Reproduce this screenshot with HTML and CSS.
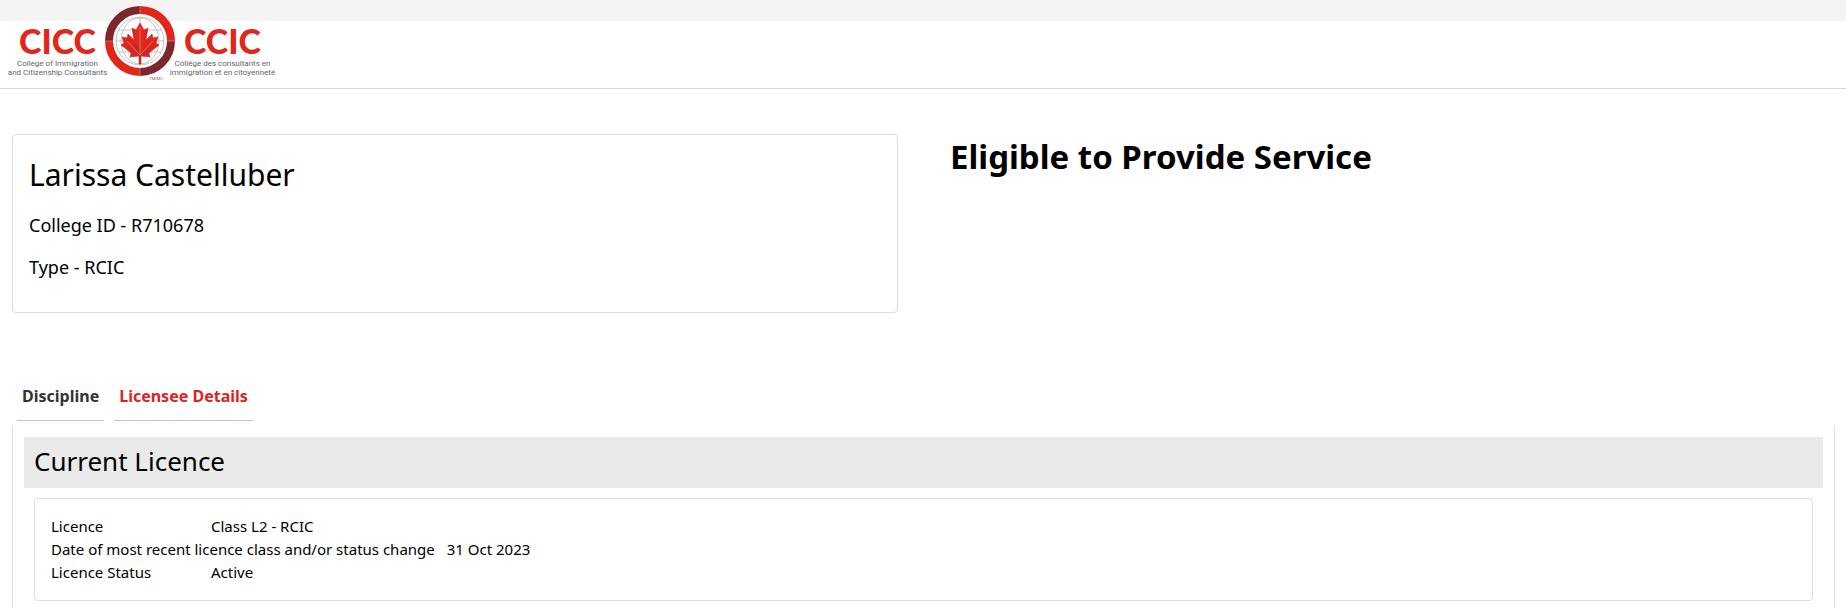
FILE: index.html
```html
<!DOCTYPE html>
<html lang="en">

<head>
    <meta charset="UTF-8">
    <meta name="viewport" content="width=device-width, initial-scale=1.0">
    <title>Larissa Castelluber - CICC</title>
    <link rel="stylesheet" href="styles.css">
</head>

<body>

    <!-- Header -->
    <header class="header">
        <a href="#" class="logo">
            <span class="logo-side">
                <strong class="logo-name">CICC</strong>
                <span class="logo-text">College of Immigration<br>and Citizenship Consultants</span>
            </span>
            <span class="logo-mark">
                <svg width="72" height="72" viewBox="0 0 72 72" aria-hidden="true">
                    <circle cx="36" cy="36" r="35" fill="#fff" />
                    <g fill="none" stroke-width="8">
                        <path d="M5 36A31 31 0 0 1 36 5" stroke="#7d272d" />
                        <path d="M36 5A31 31 0 0 1 67 36" stroke="#e1261c" />
                        <path d="M67 36A31 31 0 0 1 36 67" stroke="#7d272d" />
                        <path d="M36 67A31 31 0 0 1 5 36" stroke="#e1261c" />
                    </g>
                    <path d="M1 36h8M63 36h8M36 1v8M36 63v8" stroke="#d99a98" stroke-width=".6" />
                    <g fill="none" stroke="#b4b4b4" stroke-width=".8">
                        <circle cx="36" cy="36" r="24" />
                        <ellipse cx="36" cy="36" rx="19" ry="23" />
                        <path d="M12 36h48M15 25h42M15 47h42M36 12v48" />
                    </g>
                    <path d="M36 18l-4 7-4-2 2 12-6-6-1 4-5-1 2 6-3 2 10 8-1 4 9-1v8h2v-8l9 1-1-4 10-8-3-2 2-6-5 1-1-4-6 6 2-12-4 2z" fill="#e1261c" stroke="#c7262b" stroke-width=".6" />
                    <path d="M36 26v25l-8-15 8 9zM36 51l-15-12 9 10zM36 51l15-12-7 9z" fill="#b52b31" />
                    <path d="M36 50L23 36M36 50l13-14M36 50V22" fill="none" stroke="#e58b82" stroke-width=".7" />
                </svg>
                <small class="logo-tm">TM/MC</small>
            </span>
            <span class="logo-side">
                <strong class="logo-name">CCIC</strong>
                <span class="logo-text">Collège des consultants en<br>immigration et en citoyenneté</span>
            </span>
        </a>
    </header>

    <main class="main">
        <!-- Profile -->
        <section class="profile">
            <div class="card profile-card">
                <h1>Larissa Castelluber</h1>
                <p>College ID - R710678</p>
                <p>Type - RCIC</p>
            </div>
            <h2 class="status">Eligible to Provide Service</h2>
        </section>

        <!-- Tabs -->
        <nav class="tab-buttons">
            <button type="button" class="tab-button">Discipline</button>
            <button type="button" class="tab-button active">Licensee Details</button>
        </nav>

        <div class="tab-pane">
            <h3 class="section-title">Current Licence</h3>
            <dl class="card licence-card">
                <div class="row">
                    <dt>Licence</dt>
                    <dd>Class L2 - RCIC</dd>
                </div>
                <div class="row">
                    <dt>Date of most recent licence class and/or status change</dt>
                    <dd>31 Oct 2023</dd>
                </div>
                <div class="row">
                    <dt>Licence Status</dt>
                    <dd>Active</dd>
                </div>
            </dl>
        </div>
    </main>

</body>

</html>
```
FILE: styles.css
```css
* {
    box-sizing: border-box;
}

body {
    display: flex;
    flex-direction: column;
    min-height: 100vh;
    margin: 0;
    font-family: "Noto Sans", Tahoma, sans-serif;
    font-size: 15px;
    color: #000;
    background-color: #fff;
}

h1,
h2,
h3,
p,
dl,
dd {
    margin: 0;
}

/* Header */
.header {
    padding: 5px 6px 0;
    border-bottom: 1px solid #d8d8d8;
    background: linear-gradient(#f4f4f4 21px, #fff 21px);
}

.logo {
    display: inline-flex;
    height: 83px;
    color: #63666a;
    text-decoration: none;
    vertical-align: top;
}

.logo-side {
    display: flex;
    flex-direction: column;
    align-items: center;
    width: 103px;
    padding-top: 20px;
    white-space: nowrap;
}

.logo-name {
    font-family: Lato, sans-serif;
    font-size: 34px;
    font-weight: 900;
    line-height: 31px;
    color: #e1261c;
}

.logo-text {
    padding-top: 3px;
    font-family: Roboto, sans-serif;
    font-size: 8px;
    line-height: 9px;
    text-align: center;
}

.logo-mark {
    display: flex;
    flex-direction: column;
    align-items: center;
    width: 62px;
}

.logo-mark svg {
    flex: none;
}

.logo-tm {
    align-self: flex-end;
    padding-right: 8px;
    font-size: 4px;
    line-height: 4px;
}

/* Content */
.main {
    display: flex;
    flex: 1;
    flex-direction: column;
    padding: 45px 11px 0 12px;
}

.card {
    border: 1px solid #dedede;
    border-radius: 4px;
}

.profile {
    display: flex;
    gap: 52px;
}

.profile-card {
    flex: 0 0 48.6%;
    padding: 20px 16px 33px;
}

.profile-card h1 {
    margin-bottom: 18px;
    font-size: 30px;
    font-weight: 400;
    line-height: 40px;
}

.profile-card p {
    margin-bottom: 18px;
    font-size: 18px;
    line-height: 24px;
}

.profile-card p:last-child {
    margin-bottom: 0;
}

.status {
    padding-top: 3px;
    font-size: 33px;
    font-weight: 700;
    line-height: 40px;
}

/* Tabs */
.tab-buttons {
    display: flex;
    gap: 10px;
    padding: 59px 5px 5px;
}

.tab-button {
    padding: 12px 5px;
    border: none;
    border-bottom: 1px solid #c4c4c4;
    background-color: transparent;
    font-family: inherit;
    font-size: 16px;
    font-weight: 700;
    line-height: 24px;
    color: #333;
    cursor: pointer;
}

.tab-button.active {
    color: #dc241f;
}

.tab-pane {
    flex: 1;
    padding: 11px 11px 6px;
    border: solid #dedede;
    border-width: 0 1px;
}

.section-title {
    padding: 7px 10px 9px;
    background-color: #eaeaea;
    font-size: 26px;
    font-weight: 400;
    line-height: 35px;
}

.licence-card {
    margin: 10px 10px 0;
    padding: 16px;
}

.row {
    display: flex;
    gap: 12px;
    line-height: 23px;
}

.row dt {
    min-width: 148px;
}
```
